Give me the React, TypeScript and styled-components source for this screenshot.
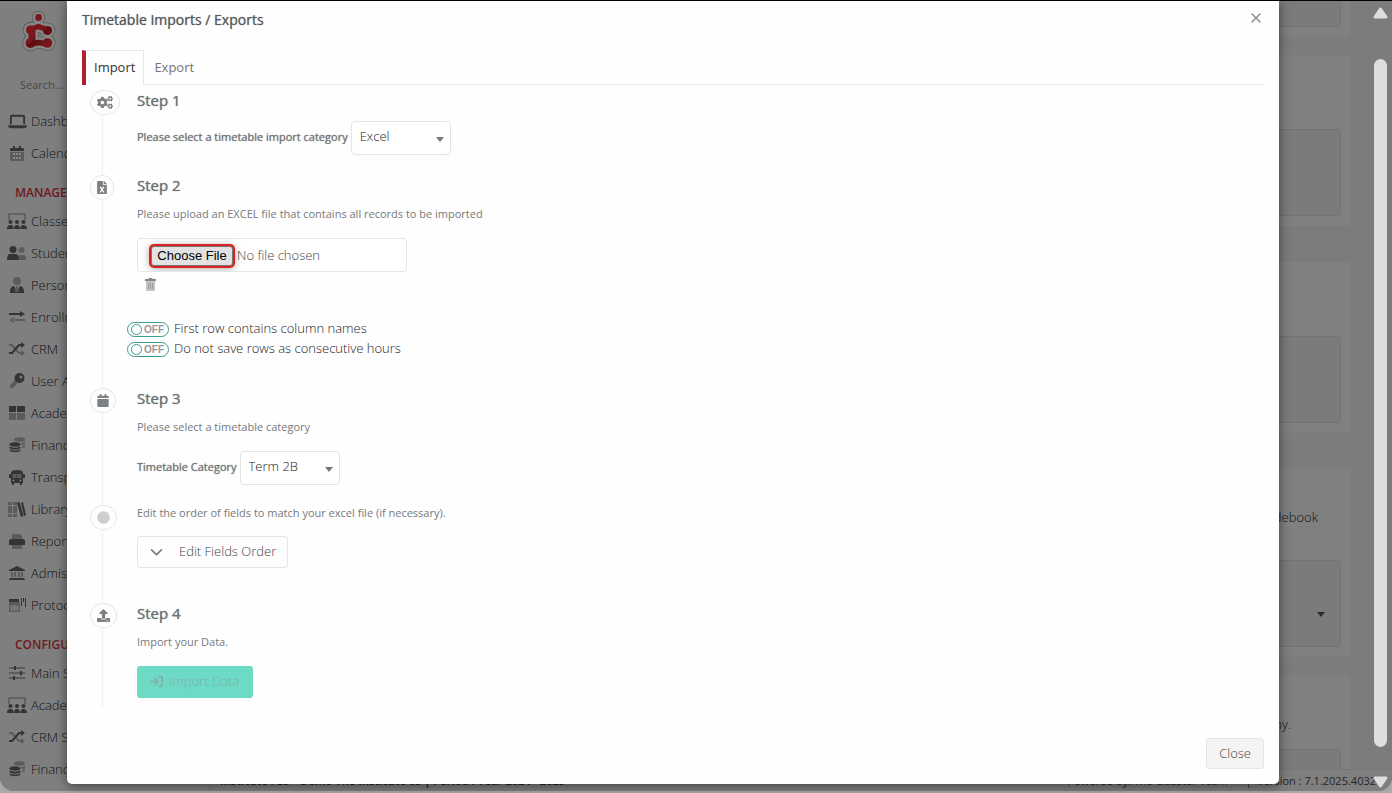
import React from 'react';
import styled, { createGlobalStyle } from 'styled-components';
import { FaCogs, FaFileExcel, FaCalendar, FaUpload, FaCircle } from 'react-icons/fa';
import { FaChevronDown, FaArrowRightToBracket, FaLaptop } from 'react-icons/fa6';
import { X } from 'lucide-react';

const GlobalStyle = createGlobalStyle`
  * { box-sizing: border-box; }
  body {
    margin: 0;
    overflow: hidden;
    background: #a9a9a9;
    font-family: 'Open Sans', 'Noto Sans', sans-serif;
    font-size: 13px;
    font-weight: 300;
    color: #444;
  }
  h1, h2, h3, p, ul { margin: 0; padding: 0; }
  button, input, select { font-family: inherit; font-size: 13px; font-weight: inherit; color: inherit; }
`;

const Screen = styled.div`
  position: relative;
  height: 100vh;
  padding-bottom: 2px;
`;

const Page = styled.div`
  display: flex;
  height: 100%;
  border-top: 1px solid #000;
  border-radius: 0 0 14px 14px;
  background: #7a7c7e;
  overflow: hidden;
`;

const Sidebar = styled.nav`
  flex: 0 0 210px;
  background: #7f7f7f;
  border-right: 1px solid #767676;
  overflow: hidden;
`;

const Brand = styled.div`
  height: 64px;
  padding: 10px 0 0 20px;
`;

const SearchBox = styled.input`
  display: block;
  width: 180px;
  height: 40px;
  padding: 0 20px 2px;
  border: 0;
  background: transparent;
  font-size: 11px;
  font-weight: 400;
  &::placeholder { color: #484848; opacity: 1; }
`;

const NavHeading = styled.h3`
  padding: 12px 0 0 15px;
  font-size: 12px;
  line-height: 24px;
  font-weight: 600;
  color: #701820;
`;

const NavList = styled.ul`
  list-style: none;
`;

const NavLink = styled.a`
  display: flex;
  align-items: center;
  gap: 4px;
  height: 32px;
  padding-left: 7px;
  color: #111;
  text-decoration: none;
  white-space: nowrap;
`;

const NavIcon = styled.span`
  display: flex;
  justify-content: center;
  width: 20px;
  color: #343434;
`;

const Main = styled.main`
  flex: 1;
  min-width: 0;
  display: flex;
  flex-direction: column;
`;

const Cards = styled.div`
  flex: 1;
  min-height: 0;
  overflow: hidden;
  padding: 0 40px 0 16px;
`;

const Card = styled.section<{ $height: number; $gap: number; $cut?: boolean }>`
  display: flex;
  flex-direction: column;
  justify-content: flex-end;
  height: ${p => p.$height}px;
  margin-bottom: ${p => p.$gap}px;
  padding: 0 10px 10px;
  border: 1px solid #797b7c;
  border-top-width: ${p => (p.$cut ? 0 : 1)}px;
  border-radius: ${p => (p.$cut ? '0 0 4px 4px' : '4px')};
  background: #808080;
  color: #111;
`;

const CardText = styled.p<{ $right: number }>`
  flex: 1;
  padding: 39px ${p => p.$right}px 0 0;
  line-height: 20px;
  text-align: right;
`;

const Panel = styled.div<{ $height: number; $cut?: boolean }>`
  display: flex;
  align-items: center;
  justify-content: flex-end;
  height: ${p => p.$height}px;
  padding: 22px 15px 0 0;
  border: 1px solid #727476;
  border-top-width: ${p => (p.$cut ? 0 : 1)}px;
  border-radius: ${p => (p.$cut ? '0 0 4px 4px' : '4px')};
  background: #797b7d;
`;

const Footer = styled.footer`
  display: flex;
  justify-content: space-between;
  height: 22px;
  padding: 0 16px 0 10px;
  border-top: 1px solid #757575;
  background: #7f7f7f;
  color: #262626;
  font-size: 11px;
  font-weight: 400;
  line-height: 22px;
  white-space: nowrap;
`;

const ScrollTrack = styled.div`
  position: absolute;
  top: 1px;
  right: 0;
  bottom: 2px;
  width: 18px;
  padding: 6px 5px 3px 0;
  display: flex;
  flex-direction: column;
  align-items: center;
  justify-content: space-between;
`;

const Thumb = styled.div`
  width: 13px;
  flex: 1;
  margin: 40px 0 29px;
  border-radius: 7px;
  background: #dedede;
`;

const Dialog = styled.div`
  position: absolute;
  top: 1px;
  left: 67px;
  right: 113px;
  padding: 0 15px 15px;
  border-radius: 0 0 5px 5px;
  background: #fefefe;
  box-shadow: 0 2px 12px rgba(0, 0, 0, 0.5);
`;

const DialogHeader = styled.header`
  display: flex;
  justify-content: space-between;
  align-items: flex-start;
  height: 49px;
  padding-top: 9px;
`;

const DialogTitle = styled.h1`
  font-size: 14px;
  line-height: 20px;
  font-weight: 400;
  color: #55585a;
  text-shadow: 0 0 1px #808284;
`;

const IconButton = styled.button`
  display: flex;
  padding: 0;
  border: 0;
  background: transparent;
  color: #888;
`;

const Tabs = styled.div`
  display: flex;
  height: 35px;
  border-bottom: 1px solid #e4e6e8;
`;

const Tab = styled.button<{ $active?: boolean }>`
  padding: 0 9px;
  border: 1px solid transparent;
  background: transparent;
  font-weight: 400;
  line-height: 18px;
  color: #727577;
  ${p =>
    p.$active &&
    `
    margin-bottom: -1px;
    padding: 0 8px 2px;
    border-color: #e4e6e8;
    border-bottom: 0;
    border-left: 4px solid #b0202c;
    background: #fefefe;
    color: #333;
  `}
`;

const Step = styled.section<{ $height: number }>`
  position: relative;
  display: flex;
  min-height: ${p => p.$height}px;
  padding-top: 5px;
  &::before {
    content: '';
    position: absolute;
    top: 0;
    bottom: 0;
    left: 20px;
    border-left: 1px solid #f0f0f1;
  }
  &:first-child::before { top: 5px; }
`;

const StepMarker = styled.div`
  position: relative;
  flex: 0 0 55px;
  display: flex;
  align-items: flex-start;
  padding-left: 8px;
`;

const Badge = styled.span<{ $glyph: number }>`
  display: flex;
  align-items: center;
  height: 25px;
  padding: 0 6px;
  border: 1px solid #e4e6e8;
  border-radius: 50%;
  background: #fefefe;
  color: #7d8083;
  svg { width: ${p => p.$glyph}px; height: 13px; }
`;

const StepBody = styled.div`
  flex: 1;
  min-width: 0;
`;

const StepTitle = styled.h2`
  margin-bottom: 11px;
  font-size: 15px;
  line-height: 20px;
  font-weight: 400;
  color: #6c6f71;
  text-shadow: 0 0 1px #808284;
`;

const Hint = styled.p`
  display: block;
  font-size: 11px;
  font-weight: 400;
  line-height: 16px;
  color: #77797b;
`;

const Field = styled.div<{ $top?: number }>`
  display: flex;
  align-items: center;
  gap: 3px;
  margin-top: ${p => p.$top ?? 0}px;
`;

const FieldLabel = styled.label`
  padding-bottom: 2px;
  font-size: 11px;
  font-weight: 400;
  line-height: 16px;
  color: #737577;
  text-shadow: 0 0 1px #808284;
`;

const SelectWrap = styled.span`
  position: relative;
  width: 100px;
  svg { position: absolute; right: 7px; top: 16px; pointer-events: none; }
`;

const Select = styled.select`
  display: block;
  appearance: none;
  width: 100%;
  height: 34px;
  padding: 0 20px 4px 8px;
  border: 1px solid #e2e4e6;
  border-radius: 4px;
  background: #fff;
  color: #222;
`;

const FileInput = styled.input`
  display: block;
  width: 270px;
  height: 34px;
  margin-top: 16px;
  padding: 6px 12px 6px 13px;
  border: 1px solid #e5e6e7;
  border-radius: 4px;
  background: #fff;
  color: #444;
  line-height: 20px;
  &::file-selector-button {
    height: 20px;
    width: 82px;
    margin: 0 4px 0 0;
    padding: 0;
    border: 1px solid #777;
    border-radius: 3px;
    background: #e2e2e2;
    box-shadow: 0 0 0 2px #dc1f1f, 0 1px 8px 1px #999;
    color: #000;
    font: 13px 'Liberation Sans', Arial, sans-serif;
  }
`;

const TrashButton = styled(IconButton)`
  margin: 6px 0 27px 8px;
`;

const ToggleRow = styled.label`
  display: flex;
  align-items: center;
  gap: 5px;
  height: 20px;
  margin-left: -10px;
  color: #222;
`;

const ToggleTrack = styled.span`
  display: flex;
  align-items: center;
  gap: 2px;
  width: 42px;
  height: 15px;
  padding-left: 3px;
  margin-top: 2px;
  border: 1px solid #3c9d8b;
  border-radius: 8px;
  font: bold 10px 'Liberation Sans', Arial, sans-serif;
  color: #999;
`;

const ToggleInput = styled.input`
  appearance: none;
  flex: none;
  width: 11px;
  height: 11px;
  margin: 0;
  border: 1px solid #3c9d8b;
  border-radius: 50%;
`;

const OutlineButton = styled.button`
  display: flex;
  align-items: center;
  gap: 16px;
  height: 32px;
  margin-top: 15px;
  padding: 0 11px 2px 12px;
  border: 1px solid #e3e5e7;
  border-radius: 3px;
  background: #fefefe;
  svg { color: #77797b; }
`;

const ImportButton = styled.button`
  display: flex;
  align-items: center;
  gap: 6px;
  height: 32px;
  margin-top: 16px;
  padding: 0 14px 2px 13px;
  border: 0;
  border-radius: 3px;
  background: #6ddac5;
  color: #80b0a8;
`;

const DialogFooter = styled.footer`
  display: flex;
  justify-content: flex-end;
  padding-top: 30px;
`;

const CloseButton = styled.button`
  height: 31px;
  padding: 0 12px 2px;
  border: 1px solid #e6e6e6;
  border-radius: 3px;
  background: #f4f4f4;
`;

const Caret = ({ color = '#777' }: { color?: string }) => (
  <svg width="8" height="5" viewBox="0 0 8 5"><path d="M0 0h8L4 5z" fill={color} /></svg>
);

const ScrollArrow = ({ down }: { down?: boolean }) => (
  <svg width="15" height="12" viewBox="0 0 15 12">
    <path
      d={down ? 'M2 2h11L7.5 10z' : 'M2 10h11L7.5 2z'}
      fill="#dedede" stroke="#dedede" strokeWidth="3" strokeLinejoin="round"
    />
  </svg>
);

const LogoShape = ({ grow, paint }: { grow: number; paint: string }) => (
  <g fill={paint} stroke={paint} strokeLinecap="round" strokeLinejoin="round">
    <g stroke="none">
      <circle cx="18.500" cy="6.500" r={3.4 + grow} />
      <circle cx="10.500" cy="19" r={4.5 + grow} />
      <circle cx="27.500" cy="19.500" r={4.6 + grow} />
      <circle cx="10.500" cy="32" r={5 + grow} />
      <circle cx="27.500" cy="32" r={4.8 + grow} />
    </g>
    <path d="M11 18 18.500 15.500 27 18.500M11 33 18.500 31.500 27 33" fill="none" strokeWidth={5.500 + grow * 2} />
    <path d="M12 19v13" fill="none" strokeWidth={7 + grow * 2} />
  </g>
);

const Logo = () => (
  <svg width="38" height="42" viewBox="0 0 38 42">
    <defs>
      <linearGradient id="brandRed" gradientUnits="userSpaceOnUse" x1="5" y1="5" x2="33" y2="36">
        <stop offset="0" stopColor="#7d161d" /><stop offset="0.5" stopColor="#7d161c" /><stop offset="0.6" stopColor="#5c0d12" /><stop offset="1" stopColor="#861a20" />
      </linearGradient>
    </defs>
    <LogoShape grow={3.2} paint="#505050" />
    <LogoShape grow={2.6} paint="#868686" />
    <LogoShape grow={0} paint="url(#brandRed)" />
  </svg>
);

const TrashIcon = () => (
  <svg width="11" height="13" viewBox="0 0 11 13">
    <path d="M1 3h9v9a1 1 0 0 1-1 1H2a1 1 0 0 1-1-1z" fill="#c4c4c4" />
    <path d="M0 1h3l1-1h3l1 1h3v2H0z" fill="#888" />
    <path d="M3.500 5v6M5.500 5v6M7.500 5v6" stroke="#999" />
  </svg>
);

const LIGHT = '#5b5b5b';

const glyphs: Record<string, React.ReactNode> = {
  laptop: <FaLaptop size={19} />,
  key: (
    <svg width="16" height="16" viewBox="0 0 16 16"><path d="M7 6 1 12v3h4v-2h2v-2l3-2z" fill={LIGHT} /><path fillRule="evenodd" d="M10.500 0a5 5 0 1 1 0 10 5 5 0 0 1 0-10zM12 2.500a1.500 1.500 0 1 0 0 3 1.500 1.500 0 0 0 0-3z" fill="currentColor" /></svg>
  ),
  bus: (
    <svg width="16" height="15" viewBox="0 0 16 15"><path d="M3 4h4.500v4H3zM8.500 4H13v4H8.500z" fill={LIGHT} /><path fillRule="evenodd" d="M8 0c4 0 6 1 6 3v1h1c1 0 1 1 1 1v3h-2v5h-1v2h-2v-2H5v2H3v-2H2V8H0V5s0-1 1-1h1V3c0-2 2-3 6-3zM3.500 4v4h4V4zM8.500 4v4h4V4zM4.500 9.500a1 1 0 1 0 0 2 1 1 0 0 0 0-2zM11.500 9.500a1 1 0 1 0 0 2 1 1 0 0 0 0-2z" fill="currentColor" /></svg>
  ),
  calendar: (
    <svg width="14" height="15" viewBox="0 0 14 15"><path d="M0 6h14v7.500a1.500 1.500 0 0 1-1.500 1.500h-11A1.500 1.500 0 0 1 0 13.500z" fill={LIGHT} /><path d="M0 5V3.500A1.500 1.500 0 0 1 1.500 2H3V0h2v2h4V0h2v2h1.500A1.500 1.500 0 0 1 14 3.500V5z" fill="currentColor" /><path d="M3 7h2v2H3zM6 7h2v2H6zM9 7h2v2H9zM3 11h2v2H3zM6 11h2v2H6zM9 11h2v2H9z" fill="#888" /></svg>
  ),
  classes: (
    <svg width="20" height="16" viewBox="0 0 20 16"><path d="M2 7V1h16v6" fill="none" stroke={LIGHT} strokeWidth="1.500" /><g fill="currentColor"><circle cx="3.500" cy="9" r="2" /><circle cx="10" cy="9" r="2" /><circle cx="16.500" cy="9" r="2" /><path d="M0 16c0-3 1-4 3.500-4S6.500 13 6.500 16zM7 16c0-3 1-4 3-4s3 1 3 4zM13.500 16c0-3 1-4 3-4s3.500 1 3.500 4z" /></g></svg>
  ),
  users: (
    <svg width="20" height="14" viewBox="0 0 20 14"><g fill={LIGHT}><circle cx="14.500" cy="4" r="3" /><path d="M12 14V9h4c3 0 3 2 3 5z" /></g><g fill="currentColor"><circle cx="6" cy="3.500" r="3.500" /><path d="M0 14c0-4 1-6 3-6h5c3 0 4 2 4 6z" /></g></svg>
  ),
  person: (
    <svg width="14" height="16" viewBox="0 0 14 16"><circle cx="7" cy="4" r="4" fill={LIGHT} /><path d="M0 16c0-5 1-6 4-7l3 6 3-6c3 1 4 2 4 7z" fill="currentColor" /><path d="M6 9h2l1 6H5z" fill={LIGHT} /></svg>
  ),
  exchange: (
    <svg width="16" height="12" viewBox="0 0 16 12"><path d="M0 2h12v2H0zM11 0l5 3-5 3z" fill="currentColor" /><path d="M4 8h12v2H4zM5 6 0 9l5 3z" fill={LIGHT} /></svg>
  ),
  shuffle: (
    <svg width="16" height="14" viewBox="0 0 16 14" fill="none" strokeWidth="2"><path d="M0 3h3l7 8h3" stroke={LIGHT} /><path d="m12 8 4 3-4 3z" fill={LIGHT} /><path d="M0 11h3l7-8h3" stroke="currentColor" /><path d="m12 0 4 3-4 3z" fill="currentColor" /></svg>
  ),
  grid: (
    <svg width="16" height="14" viewBox="0 0 16 14"><path d="M0 0h7v6H0zM8 0h8v6H8z" fill="currentColor" /><path d="M0 7h7v7H0zM8 7h8v7H8z" fill={LIGHT} /></svg>
  ),
  coins: (
    <svg width="16" height="16" viewBox="0 0 16 16"><g fill={LIGHT}><ellipse cx="10.500" cy="2.500" rx="5.500" ry="2.300" /><path d="M12 6c2 0 4-1 4-2v2c0 1-1 2-3 2zM13 9c2 0 3-1 3-2v2c0 1-1 2-3 2z" /></g><g fill="currentColor" stroke="#7f7f7f"><ellipse cx="6" cy="13" rx="6" ry="2.700" /><ellipse cx="6" cy="10.500" rx="6" ry="2.700" /><ellipse cx="6" cy="7.500" rx="6" ry="2.700" /></g></svg>
  ),
  books: (
    <svg width="18" height="15" viewBox="0 0 18 15"><path d="M0 0h4v15H0zM5 0h4v15H5z" fill={LIGHT} /><path d="M0 3.500h9M0 11.500h9" stroke="#7f7f7f" /><path d="m9 1 2.500-1 4 14-2.500 1zM13 1l2-1 3 13-2 1z" fill="currentColor" /></svg>
  ),
  print: (
    <svg width="16" height="15" viewBox="0 0 16 15"><path d="M3 6V0h8l2 2v4M3 10h10v5H3z" fill={LIGHT} /><path d="M2 5h12c1 0 2 1 2 2v4H0V7c0-1 1-2 2-2z" fill="currentColor" /></svg>
  ),
  bank: (
    <svg width="16" height="14" viewBox="0 0 16 14"><path d="M0 4 8 0l8 4v1H0zM1 12h14l1 2H0z" fill="currentColor" /><path d="M2 6h2v5H2zM5 6h2v5H5zM9 6h2v5H9zM12 6h2v5h-2z" fill={LIGHT} /></svg>
  ),
  protocol: (
    <svg width="18" height="16" viewBox="0 0 18 16"><path d="M1 5h11v10H1z" fill={LIGHT} /><path d="M3 9h7v4H3zM6.500 9v4M3 11h7" fill="none" stroke="#858585" /><path d="M1 2h10v3H1z" fill="currentColor" /><path d="M13.500 1v8M15.500 1v4M17.500 1v9" fill="none" stroke="currentColor" /></svg>
  ),
  sliders: (
    <svg width="16" height="14" viewBox="0 0 16 14"><path d="M0 2h16M0 7h16M0 12h16" stroke={LIGHT} strokeWidth="2" /><path d="M6 0v4M12 5v4M5 10v4" stroke="currentColor" strokeWidth="2" /></svg>
  ),
};

type Item = [icon: string, text: string];

const general: Item[] = [['laptop', 'Dashboard'], ['calendar', 'Calendar']];
const management: Item[] = [
  ['classes', 'Classes'], ['users', 'Students'], ['person', 'Personnel'], ['exchange', 'Enrollments'],
  ['shuffle', 'CRM'], ['key', 'User Accounts'], ['grid', 'Academic'], ['coins', 'Financial'],
  ['bus', 'Transportation'], ['books', 'Library'], ['print', 'Reports'], ['bank', 'Admissions'], ['protocol', 'Protocol'],
];
const configuration: Item[] = [
  ['sliders', 'Main Settings'], ['classes', 'Academic Settings'], ['shuffle', 'CRM Settings'], ['coins', 'Financial Settings'],
];

const Nav = ({ items }: { items: Item[] }) => (
  <NavList>
    {items.map(([icon, text]) => (
      <li key={text}>
        <NavLink href="#"><NavIcon>{glyphs[icon]}</NavIcon>{text}</NavLink>
      </li>
    ))}
  </NavList>
);

type StepProps = { height: number; glyph: number; icon: React.ReactNode; children: React.ReactNode };

const TimelineStep = ({ height, glyph, icon, children }: StepProps) => (
  <Step $height={height}>
    <StepMarker><Badge $glyph={glyph}>{icon}</Badge></StepMarker>
    <StepBody>{children}</StepBody>
  </Step>
);

const Toggle = ({ text }: { text: string }) => (
  <ToggleRow>
    <ToggleTrack><ToggleInput type="checkbox" />OFF</ToggleTrack>
    {text}
  </ToggleRow>
);

export default function App() {
  return (
    <Screen>
      <GlobalStyle />
      <Page>
        <Sidebar>
          <Brand><Logo /></Brand>
          <SearchBox placeholder="Search..." aria-label="Search" />
          <Nav items={general} />
          <NavHeading>MANAGEMENT</NavHeading>
          <Nav items={management} />
          <NavHeading>CONFIGURATION</NavHeading>
          <Nav items={configuration} />
        </Sidebar>
        <Main>
          <Cards>
            <Card $height={37} $gap={16} $cut><Panel $height={26} $cut /></Card>
            <Card $height={173} $gap={34}><Panel $height={87} /></Card>
            <Card $height={173} $gap={33}><Panel $height={87} /></Card>
            <Card $height={191} $gap={16}>
              <CardText $right={23}>Import and export your gradebook</CardText>
              <Panel $height={87}><Caret color="#2b2b2b" /></Panel>
            </Card>
            <Card $height={173} $gap={0}>
              <CardText $right={50}>Configure the company.</CardText>
              <Panel $height={87} />
            </Card>
          </Cards>
          <Footer>
            <b>Institute : ED - Demo The Institute 03 | Period : Year 2024 - 2025</b>
            <span>● Powered by: The Classter Team ❤ &nbsp;| &nbsp;Version : 7.1.2025.4032</span>
          </Footer>
        </Main>
      </Page>
      <ScrollTrack>
        <ScrollArrow />
        <Thumb />
        <ScrollArrow down />
      </ScrollTrack>
      <Dialog role="dialog" aria-label="Timetable Imports / Exports">
        <DialogHeader>
          <DialogTitle>Timetable Imports / Exports</DialogTitle>
          <IconButton aria-label="Close dialog"><X size={16} strokeWidth={2} /></IconButton>
        </DialogHeader>
        <Tabs role="tablist">
          <Tab role="tab" aria-selected $active>Import</Tab>
          <Tab role="tab">Export</Tab>
        </Tabs>
        <div>
          <TimelineStep height={85} glyph={16} icon={<FaCogs />}>
            <StepTitle>Step 1</StepTitle>
            <Field>
              <FieldLabel htmlFor="import-category">Please select a timetable import category</FieldLabel>
              <SelectWrap>
                <Select id="import-category"><option>Excel</option></Select>
                <Caret />
              </SelectWrap>
            </Field>
          </TimelineStep>
          <TimelineStep height={213} glyph={10} icon={<FaFileExcel />}>
            <StepTitle>Step 2</StepTitle>
            <Hint as="label" htmlFor="import-file">Please upload an EXCEL file that contains all records to be imported</Hint>
            <FileInput id="import-file" type="file" />
            <TrashButton aria-label="Remove file"><TrashIcon /></TrashButton>
            <Toggle text="First row contains column names" />
            <Toggle text="Do not save rows as consecutive hours" />
          </TimelineStep>
          <TimelineStep height={117} glyph={12} icon={<FaCalendar />}>
            <StepTitle>Step 3</StepTitle>
            <Hint>Please select a timetable category</Hint>
            <Field $top={16}>
              <FieldLabel htmlFor="timetable-category">Timetable Category</FieldLabel>
              <SelectWrap>
                <Select id="timetable-category"><option>Term 2B</option></Select>
                <Caret />
              </SelectWrap>
            </Field>
          </TimelineStep>
          <TimelineStep height={98} glyph={13} icon={<FaCircle color="#cfcfd1" />}>
            <Hint>Edit the order of fields to match your excel file (if necessary).</Hint>
            <OutlineButton><FaChevronDown size={13} />Edit Fields Order</OutlineButton>
          </TimelineStep>
          <TimelineStep height={110} glyph={13} icon={<FaUpload />}>
            <StepTitle>Step 4</StepTitle>
            <Hint>Import your Data.</Hint>
            <ImportButton disabled><FaArrowRightToBracket size={13} />Import Data</ImportButton>
          </TimelineStep>
        </div>
        <DialogFooter><CloseButton>Close</CloseButton></DialogFooter>
      </Dialog>
    </Screen>
  );
}
